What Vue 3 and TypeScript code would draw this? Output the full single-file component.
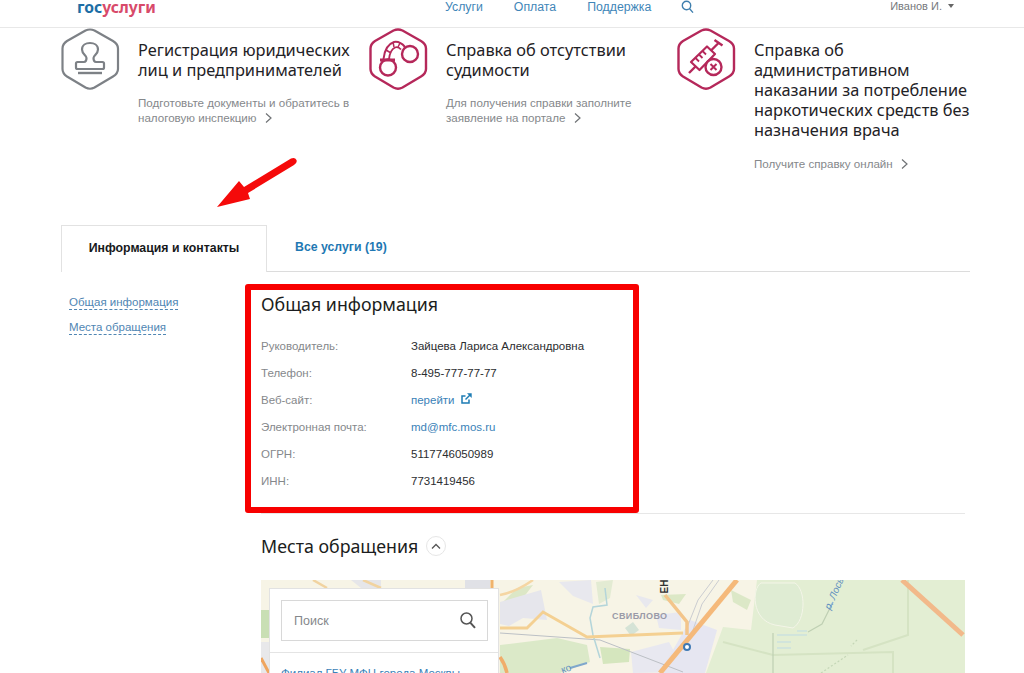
<script setup lang="ts">
const nav = ['Услуги', 'Оплата', 'Поддержка']
const hexPath = 'M24.5 2.5Q29 .5 33.5 2.5L52 13Q57 16 57 20.5V41Q57 45.5 52 48.5L33.5 59.5Q29 62 24.5 59.5L6 48.5Q1.5 45.5 1.5 41V20.5Q1.5 16 6 13Z'
const rows = [
  { label: 'Руководитель:', value: 'Зайцева Лариса Александровна' },
  { label: 'Телефон:', value: '8-495-777-77-77' },
  { label: 'Веб-сайт:', value: 'перейти', link: true, ext: true },
  { label: 'Электронная почта:', value: 'md@mfc.mos.ru', link: true },
  { label: 'ОГРН:', value: '5117746050989' },
  { label: 'ИНН:', value: '7731419456' }
]
</script>

<template>
  <div class="page">
    <header class="topbar">
      <div class="logo"><span class="logo-blue">гос</span><span class="logo-red">услуги</span></div>
      <nav class="nav">
        <a v-for="n in nav" :key="n" class="nav-link">{{ n }}</a>
        <svg class="nav-search" width="13" height="14" viewBox="0 0 13 14" fill="none" stroke="#3f7fae" stroke-width="1.4"><circle cx="5.5" cy="5.5" r="4.2"/><path d="M8.6 8.8 12 12.6"/></svg>
      </nav>
      <div class="user">Иванов И.<span class="caret"></span></div>
    </header>

    <section class="promos">
      <article class="promo">
        <svg class="hex" width="60" height="64" viewBox="0 0 60 64" fill="none" stroke="#7d8186" stroke-width="2.2" stroke-linejoin="round">
          <path :d="hexPath"/>
          <path d="M25.500 30C25.500 27.500 21 26 21 21.500 21 17 25 15 29 15 33 15 37 17 37 21.500 37 26 32.500 27.500 32.500 30 32.500 32.500 33.500 34 35 34H41.500Q43 34 43 35.500V39.500Q43 41 41.500 41H16.500Q15 41 15 39.500V35.500Q15 34 16.500 34H23C24.500 34 25.500 32.500 25.500 30Z"/>
          <path d="M17 45H41" stroke-width="2.400"/>
        </svg>
        <div class="promo-body">
          <h3>Регистрация юридических лиц и предпринимателей</h3>
          <p>Подготовьте документы и обратитесь в налоговую инспекцию<svg class="chev" width="8" height="12" viewBox="0 0 8 12" fill="none" stroke="#6f7275" stroke-width="1.2"><path d="M1 1.500 6 6l-5 4.500"/></svg></p>
        </div>
      </article>
      <article class="promo">
        <svg class="hex" width="60" height="64" viewBox="0 0 60 64" fill="none" stroke="#b5285a" stroke-width="2.4" stroke-linejoin="round">
          <path :d="hexPath"/>
          <circle cx="19" cy="39.500" r="8"/>
          <circle cx="41" cy="26" r="8"/>
          <path d="M11 32H26" stroke-width="3"/>
          <path d="M14.500 31Q16 17 25 14Q31 13 36 19" stroke-width="2"/>
          <path d="M20 31Q21 22 26 19.500Q29 18 32 21.500" stroke-width="1.800"/>
          <path d="M17 22l5 3M24 14l1 5M31 15l-2 4" stroke-width="1.500"/>
        </svg>
        <div class="promo-body">
          <h3>Справка об отсутствии судимости</h3>
          <p>Для получения справки заполните заявление на портале<svg class="chev" width="8" height="12" viewBox="0 0 8 12" fill="none" stroke="#6f7275" stroke-width="1.2"><path d="M1 1.500 6 6l-5 4.500"/></svg></p>
        </div>
      </article>
      <article class="promo">
        <svg class="hex" width="60" height="64" viewBox="0 0 60 64" fill="none" stroke="#b5285a" stroke-width="2.4" stroke-linejoin="round">
          <path :d="hexPath"/>
          <path d="M12 45 18.500 38.500" stroke-width="2.400"/>
          <path d="M14 34 22.500 42 38 26 30 18.500Z" stroke-width="2.200"/>
          <path d="M18.500 30l3.500 3.500M22 26.500l3.500 3.500M25.500 23l3.500 3.500" stroke-width="1.800"/>
          <path d="M34 22.500 42 14.500M37.500 12 45.500 17.500" stroke-width="2.400"/>
          <circle cx="36.500" cy="39" r="8" fill="#fff"/>
          <path d="M33.500 36l6 6M39.500 36l-6 6" stroke-width="2"/>
        </svg>
        <div class="promo-body">
          <h3>Справка об административном наказании за потребление наркотических средств без назначения врача</h3>
          <p class="p-wide">Получите справку онлайн<svg class="chev" width="8" height="12" viewBox="0 0 8 12" fill="none" stroke="#6f7275" stroke-width="1.2"><path d="M1 1.500 6 6l-5 4.500"/></svg></p>
        </div>
      </article>
    </section>

    <svg class="red-arrow" width="90" height="56" viewBox="0 0 90 56" fill="#f50a0a">
      <path d="M2 52 24 26 29 32 76 3.500Q80 2 81.500 5 82.500 8 79 10L33 38 35 44Z"/>
    </svg>

    <div class="tabs">
      <div class="tab tab-active">Информация и контакты</div>
      <div class="tab tab-link">Все услуги (19)</div>
    </div>

    <div class="content">
      <aside class="side">
        <a>Общая информация</a>
        <a>Места обращения</a>
      </aside>
      <main class="main">
        <section class="info">
          <h2>Общая информация</h2>
          <dl class="rows">
            <div v-for="r in rows" :key="r.label" class="row">
              <dt>{{ r.label }}</dt>
              <dd :class="{ lnk: r.link }">{{ r.value }}<svg v-if="r.ext" class="ext" width="11" height="11" viewBox="0 0 11 11" fill="none" stroke="#1d7cb4" stroke-width="1.5"><path d="M8 6.500V10H1V3h3.500"/><path d="M4.500 6.500 9 2"/><path d="M6 .3h4.700V5Z" fill="#1d7cb4" stroke="none"/></svg></dd>
            </div>
          </dl>
        </section>
        <hr class="sep" />
        <div class="places">
          <h2>Места обращения</h2>
          <span class="toggle"><svg width="10" height="7" viewBox="0 0 10 7" fill="none" stroke="#555" stroke-width="1.3"><path d="M1 5.500 5 1.500l4 4"/></svg></span>
        </div>
        <div class="map">
          <svg class="map-art" width="704" height="93" viewBox="0 0 704 93" fill="none">
            <rect width="704" height="93" fill="#f7f4e6"/>
            <!-- green zones -->
            <path d="M445 93 462 47 490 50 496 0H704V93Z" fill="#e3eed3"/>
            <path d="M0 30H8V58H0Z" fill="#c9dfb4"/>
            <path d="M0 62H8V93H0Z" fill="#e8e8ea"/>
            <path d="M239 65 296 58 326 65 329 82 299 93H239Z" fill="#dbe9c8"/>
            <path d="M339 67 369 69 368 82 342 84Z" fill="#d5e6be"/>
            <path d="M335 2 352 0 349 18 338 24Z" fill="#e3ebd3"/>
            <path d="M262 18 272 5 256 8 240 24Z" fill="#dce7c6"/>
            <path d="M400 15 425 14 418 24 402 20Z" fill="#dce8c6"/>
            <path d="M364 48 372 42 378 50 370 56Z" fill="#d5e3d6"/>
            <path d="M470 10 490 20 486 30 472 22Z" fill="#dce8c7"/>
            <path d="M514 45 C490 40 491 8 500 3 H534 C545 10 545 40 532 48 Z" fill="#dfecd3" stroke="#f4f5e8" stroke-width="1"/>
            <!-- built-up -->
            <path d="M239 22 280 10 286 40 262 38 248 46 239 44Z" fill="#e6e6ec"/>
            <path d="M298 2 330 0 332 24 312 16Z" fill="#e8e8ee"/>
            <path d="M375 15 392 20 385 28Z" fill="#e8e8ee"/>
            <path d="M395 35 420 32 420 50 398 48Z" fill="#e8e8f0"/>
            <path d="M370 72 408 62 424 92 372 93Z" fill="#e8e8f0"/>
            <path d="M429 40 456 50 444 93 399 93Z" fill="#e6e6f1"/>
            <path d="M204 0H229V8H204Z" fill="#e0e1e6"/>
            <path d="M90 0H120V8H100Z" fill="#e6e6e9"/>
            <!-- thin lines -->
            <path d="M239 53 339 60 422 92" stroke="#bcc0c5" stroke-width="1"/>
            <path d="M425 50 437 20 452 0M432 50 441 24 458 0" stroke="#cbcdd1" stroke-width="1"/>
            <path d="M344 8 346 25 332 27 329 38 332 55 339 78" stroke="#b4d5da" stroke-width="1.500"/>
            <path d="M462 62 512 75 632 72 632 93M602 70 647 55 647 0" stroke="#d5e3c3" stroke-width="2"/>
            <path d="M512 53V93M547 52 561 44 569 28" stroke="#bfd0b3" stroke-width="1.200"/>
            <path d="M516 55H546M516 62H530M516 68H530M536 51H546" stroke="#bfdbe4" stroke-width="1"/>
            <path d="M569 28 572 22" stroke="#8eb7d6" stroke-width="1.500"/>
            <path d="M560 93 587 75M596 60 590 66" stroke="#c4d6b6" stroke-dasharray="2 2" stroke-width="1.200"/>
            <path d="M309 88 326 83" stroke="#7fa7cc" stroke-width="2"/>
            <!-- roads -->
            <path d="M239 15Q255 12 272 0" stroke="#f5d6a3" stroke-width="2.500"/>
            <path d="M239 48H266L282 32 326 57 422 53" stroke="#f4d092" stroke-width="2.800"/>
            <path d="M404 15 426 42V55" stroke="#f3c58a" stroke-width="3.500"/>
            <path d="M399 93 476 0" stroke="#f5b97a" stroke-width="5"/>
            <path d="M641 0 702 55" stroke="#f2b98a" stroke-width="5"/>
            <path d="M239 77Q244 84 246 93" stroke="#f0ad6a" stroke-width="3.500"/>
            <path d="M231 0V8" stroke="#f0b36b" stroke-width="3"/>
            <path d="M52 0 66 8M102 0 120 8" stroke="#f1d3a0" stroke-width="2.500"/>
            <path d="M0 78 8 93" stroke="#efa55f" stroke-width="3"/>
            <circle cx="426" cy="67" r="3" fill="#fff" stroke="#3f79b4" stroke-width="2"/>
          </svg>
          <span class="lbl lbl-1">СВИБЛОВО</span>
          <span class="lbl lbl-2">ЕН</span>
          <span class="lbl lbl-3">р. Лось</span>
          <span class="lbl lbl-4">ко</span>
          <div class="panel">
            <div class="search-wrap">
              <div class="search">
                <span>Поиск</span>
                <svg width="16" height="17" viewBox="0 0 16 17" fill="none" stroke="#555" stroke-width="1.5"><circle cx="6.500" cy="6.500" r="5.500"/><path d="M10.500 10.800 15 15.800" stroke-width="2"/></svg>
              </div>
            </div>
            <a class="branch">Филиал ГБУ МФЦ города Москвы</a>
          </div>
        </div>
      </main>
    </div>
  </div>
</template>

<style>
html, body { margin: 0; background: #fff; }
body { overflow: hidden; height: 673px; }
</style>

<style scoped>
.page {
  position: relative;
  width: 1024px;
  height: 673px;
  overflow: hidden;
  font-family: "Liberation Sans", Arial, sans-serif;
  color: #222;
  background: #fff;
}
.topbar {
  height: 27px;
  border-bottom: 1px solid #e8e8e8;
  display: flex;
  align-items: flex-start;
}
.logo {
  margin-left: 77px;
  width: 368px;
  font-family: "Noto Sans", sans-serif;
  font-weight: 700;
  font-size: 15.7px;
  line-height: 14px;
}
.logo-blue { color: #1c6ea5; }
.logo-red { color: #d84a6a; }
.nav { display: flex; gap: 31px; align-items: center; height: 14px; }
.nav-link { font-size: 12.3px; line-height: 14px; color: #3f86b8; }
.nav-search { margin-left: -1px; }
.user { margin-left: auto; margin-right: 70px; font-size: 11px; line-height: 12px; color: #76797c; display: flex; align-items: center; }
.caret { display: inline-block; margin-left: 6px; border: 3px solid transparent; border-top: 4px solid #666; border-bottom: 0; }
.promos { display: flex; padding-left: 61px; height: 170px; }
.promo { display: flex; gap: 17px; width: 308px; flex: none; }
.hex { flex: none; }
.promo-body { padding-top: 12px; }
.promo-body h3 {
  margin: 0;
  font-family: "Noto Sans", sans-serif;
  font-weight: 400;
  font-size: 16.35px;
  line-height: 20px;
  color: #1f2226;
}
.promo-body p {
  margin: 14.5px 0 0;
  font-size: 11.6px;
  line-height: 15.5px;
  color: #85888b;
  width: 215px;
}
.promo-body p.p-wide { width: 200px; margin-top: 15.5px; }
.chev { margin-left: 8px; vertical-align: -2px; }
.red-arrow { position: absolute; left: 215px; top: 155px; }
.tabs { display: flex; height: 46px; border-bottom: 1px solid #dcdcdc; margin: 27px 54px 0 61px; }
.tab { font-size: 12.3px; font-weight: 700; line-height: 44px; }
.tab-active {
  width: 206px;
  box-sizing: border-box;
  text-align: center;
  height: 47px;
  border: 1px solid #e2e2e2;
  border-bottom: 0;
  background: #fff;
  color: #17191b;
}
.tab-link { color: #1f78b3; margin-left: 28px; }
.content { display: flex; }
.side {
  flex: none;
  width: 261px;
  box-sizing: border-box;
  padding: 23px 0 0 69px;
  display: flex;
  flex-direction: column;
  align-items: flex-start;
  gap: 10px;
}
.side a { font-size: 11.5px; line-height: 14px; color: #4f86b3; border-bottom: 1px dashed #4f86b3; }
.main { flex: none; width: 704px; }
.info {
  width: 394px;
  height: 229px;
  box-sizing: border-box;
  margin: 12px 0 0 -16px;
  border: 6px solid #f80000;
  border-radius: 3px;
  padding: 2px 0 0 10px;
}
.info h2, .places h2 {
  margin: 0;
  font-family: "Noto Sans", sans-serif;
  font-weight: 400;
  font-size: 17.8px;
  line-height: 24px;
  color: #1b1d20;
}
.rows { margin: 23px 0 0; }
.row { display: flex; height: 27px; font-size: 11.5px; line-height: 14px; }
.row dt { width: 150px; color: #85888b; flex: none; }
.row dd { margin: 0; color: #2b2d30; display: flex; align-items: center; height: 14px; }
.row dd.lnk { color: #3a82b8; }
.ext { margin-left: 6px; margin-top: -3px; }
.sep { border: 0; border-top: 1px solid #e7e7e7; margin: 0; }
.places { display: flex; align-items: center; gap: 8px; margin-top: 20px; height: 24px; }
.toggle { width: 18px; height: 18px; border-radius: 50%; border: 1px solid #e6e6e6; display: flex; align-items: center; justify-content: center; }
.map { position: relative; margin-top: 22px; height: 93px; overflow: hidden; }
.map-art { display: block; filter: blur(.7px); }
.lbl { position: absolute; white-space: nowrap; }
.lbl-1 { left: 351px; top: 31px; font-size: 9px; font-weight: 700; letter-spacing: .4px; color: #9a9aa8; }
.lbl-2 { left: 397px; top: 1px; font-size: 10px; font-weight: 700; color: #333; transform: rotate(-90deg); }
.lbl-3 { left: 556px; top: 8px; color: #5f90c0; font-style: italic; font-size: 10px; transform: rotate(-66deg); }
.lbl-4 { left: 300px; top: 83px; color: #5f90c0; font-size: 10px; transform: rotate(-20deg); }
.panel { position: absolute; left: 8px; top: 8px; width: 230px; height: 100px; background: #fff; border: 1px solid #e2e2e2; box-sizing: border-box; }
.search-wrap { padding: 11px 10px 11px 11px; border-bottom: 1px solid #e4e4e4; }
.search { height: 41px; box-sizing: border-box; border: 1px solid #d8d8d8; display: flex; align-items: center; justify-content: space-between; padding: 0 11px 0 12px; font-size: 12.5px; color: #85888b; }
.branch { display: block; margin: 13px 0 0 11px; font-size: 11.5px; line-height: 14px; color: #3a82b8; white-space: nowrap; }
</style>
